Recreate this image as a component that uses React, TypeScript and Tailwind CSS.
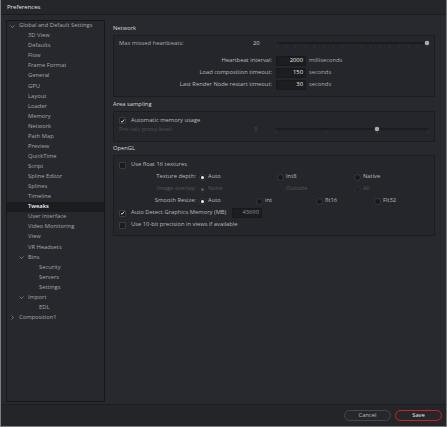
import React from 'react';

// Tree rows for the left-hand settings navigator
type TreeRow = { label: string; depth: number; chevron?: 'open' | 'closed'; selected?: boolean };

const treeRows: TreeRow[] = [
  { label: 'Global and Default Settings', depth: 0, chevron: 'open' },
  { label: '3D View', depth: 1 },
  { label: 'Defaults', depth: 1 },
  { label: 'Flow', depth: 1 },
  { label: 'Frame Format', depth: 1 },
  { label: 'General', depth: 1 },
  { label: 'GPU', depth: 1 },
  { label: 'Layout', depth: 1 },
  { label: 'Loader', depth: 1 },
  { label: 'Memory', depth: 1 },
  { label: 'Network', depth: 1 },
  { label: 'Path Map', depth: 1 },
  { label: 'Preview', depth: 1 },
  { label: 'QuickTime', depth: 1 },
  { label: 'Script', depth: 1 },
  { label: 'Spline Editor', depth: 1 },
  { label: 'Splines', depth: 1 },
  { label: 'Timeline', depth: 1 },
  { label: 'Tweaks', depth: 1, selected: true },
  { label: 'User Interface', depth: 1 },
  { label: 'Video Monitoring', depth: 1 },
  { label: 'View', depth: 1 },
  { label: 'VR Headsets', depth: 1 },
  { label: 'Bins', depth: 1, chevron: 'open' },
  { label: 'Security', depth: 2 },
  { label: 'Servers', depth: 2 },
  { label: 'Settings', depth: 2 },
  { label: 'Import', depth: 1, chevron: 'open' },
  { label: 'EDL', depth: 2 },
  { label: 'Composition1', depth: 0, chevron: 'closed' },
];

// left padding before the 9px chevron slot, per depth
const rowPad = ['pl-[3px]', 'pl-[12px]', 'pl-[23px]'];

function Chevron({ open }: { open: boolean }) {
  return (
    <svg width="5" height="5" viewBox="0 0 10 10">
      {open ? (
        <path d="M1 3 L5 7 L9 3" fill="none" stroke="#9a9ba0" strokeWidth="1.3" />
      ) : (
        <path d="M3 1 L7 5 L3 9" fill="none" stroke="#9a9ba0" strokeWidth="1.3" />
      )}
    </svg>
  );
}

function Tree() {
  return (
    <div className="ml-[5px] mt-[5px] w-[99px] h-[382px] bg-[#27282d] border border-[#16171a] flex flex-col">
      {treeRows.map((row) => (
        <div
          key={row.label}
          className={`h-[10.07px] flex items-center ${rowPad[row.depth]} ${row.selected ? 'bg-[#1b1c20] text-[#f2f2f2] font-semibold' : 'text-[#a6a7ab]'}`}
        >
          <span className="w-[9px] flex items-center shrink-0">
            {row.chevron && <Chevron open={row.chevron === 'open'} />}
          </span>
          <span className="leading-none">{row.label}</span>
        </div>
      ))}
    </div>
  );
}

function Checkbox({ checked }: { checked: boolean }) {
  return (
    <span className="w-[7px] h-[7px] bg-[#1a1b1e] border border-[#3a3b40] rounded-[1px] flex items-center justify-center shrink-0">
      {checked && (
        <svg width="6" height="6" viewBox="0 0 10 10">
          <path d="M2 5.5 L4.2 7.6 L8.4 2" fill="none" stroke="#f0f0f0" strokeWidth="1.8" />
        </svg>
      )}
    </span>
  );
}

function Radio({ on, disabled }: { on?: boolean; disabled?: boolean }) {
  return (
    <span
      className={`w-[7px] h-[7px] rounded-full flex items-center justify-center shrink-0 ${disabled ? 'bg-[#222327] border border-[#2c2d31]' : 'bg-[#17181b] border border-[#3a3b40]'}`}
    >
      {on && <span className={`w-[3px] h-[3px] rounded-full ${disabled ? 'bg-[#5c5d62]' : 'bg-[#f4f4f4]'}`} />}
    </span>
  );
}

function Slider({ width, thumb, ticks }: { width: number; thumb: number; ticks: number }) {
  return (
    <svg width={width} height="8" className="shrink-0 overflow-visible">
      <line x1="0" y1="3" x2={width} y2="3" stroke="#111214" strokeWidth="1" />
      {Array.from({ length: ticks }).map((_, i) => {
        const x = (width * i) / (ticks - 1);
        return <line key={i} x1={x} y1="6" x2={x} y2="7.5" stroke="#45464b" strokeWidth="0.6" />;
      })}
      <circle cx={thumb} cy="3" r="2.3" fill="#a8a9ad" />
    </svg>
  );
}

function NumberField({ value, width, dim }: { value: string; width: number; dim?: boolean }) {
  return (
    <span
      style={{ width }}
      className={`h-[10px] bg-[#1c1d20] border border-[#18191b] flex items-center justify-end pr-[2px] shrink-0 ${dim ? 'text-[#8c8d92]' : 'text-[#ececec]'}`}
    >
      {value}
    </span>
  );
}

function GroupHeader({ title, top }: { title: string; top: string }) {
  return <div className={`h-[10px] flex items-center text-[#d6d6d8] ${top} mb-[1px]`}>{title}</div>;
}

function TimeoutRow({ label, value, unit }: { label: string; value: string; unit: string }) {
  return (
    <div className="h-[12px] flex items-center">
      <span className="w-[158px] text-right text-[#b9babe]">{label}</span>
      <span className="ml-[4px]">
        <NumberField value={value} width={30} />
      </span>
      <span className="ml-[3px] text-[#a9aaae]">{unit}</span>
    </div>
  );
}

type Opt = { label: string; on?: boolean; w: number };

function RadioRow({ label, options, disabled }: { label: string; options: Opt[]; disabled?: boolean }) {
  return (
    <div className={`h-[12px] flex items-center ${disabled ? 'text-[#55565b]' : 'text-[#b9babe]'}`}>
      <span className="w-[82px] text-right">{label}</span>
      <span className="ml-[3px] flex items-center">
        {options.map((o) => (
          <span key={o.label} style={{ width: o.w }} className="flex items-center">
            <Radio on={o.on} disabled={disabled} />
            <span className="ml-[2px]">{o.label}</span>
          </span>
        ))}
      </span>
    </div>
  );
}

function CheckRow({ label, checked, children }: { label: string; checked: boolean; children?: React.ReactNode }) {
  return (
    <div className="h-[12px] flex items-center pl-[5px] text-[#b9babe]">
      <Checkbox checked={checked} />
      <span className="ml-[5px]">{label}</span>
      {children}
    </div>
  );
}

export default function App() {
  return (
    <div
      className="w-[447px] h-[427px] bg-[#28292e] border-r border-b border-l border-[#7d7e82] flex flex-col text-[5.8px] leading-none overflow-hidden"
      style={{ fontFamily: '"Open Sans", "Noto Sans", sans-serif' }}
    >
      <div className="h-[15px] shrink-0 bg-[#25262a] border-b border-[#1a1b1e] flex items-center pl-[6px] text-[#e4e4e6] text-[6px]">
        Preferences
      </div>

      <div className="flex-1 flex min-h-0">
        <Tree />

        <div className="ml-[8px] w-[322px] pt-[9px] flex flex-col">
          <GroupHeader title="Network" top="" />
          <div className="h-[62px] bg-[#25262b] border border-[#1b1c1f] rounded-[1px] pt-[2px] flex flex-col">
            <div className="h-[12px] flex items-center pl-[5px] text-[#a9aaae]">
              <span className="w-[134px]">Max missed heartbeats:</span>
              <span className="w-[24px] text-[#c9c9cc]">20</span>
              <Slider width={150} thumb={150} ticks={17} />
            </div>
            <div className="mt-[5px]">
              <TimeoutRow label="Heartbeat interval:" value="2000" unit="milliseconds" />
              <TimeoutRow label="Load composition timeout:" value="150" unit="seconds" />
              <TimeoutRow label="Last Render Node restart timeout:" value="30" unit="seconds" />
            </div>
          </div>

          <GroupHeader title="Area sampling" top="mt-[3px]" />
          <div className="h-[31px] bg-[#25262b] border border-[#1b1c1f] rounded-[1px] pt-[4px] flex flex-col">
            <div className="h-[9px] flex items-center pl-[5px] text-[#b9babe]">
              <Checkbox checked />
              <span className="ml-[5px]">Automatic memory usage</span>
            </div>
            <div className="h-[9px] flex items-center pl-[5px] text-[#505156]">
              <span className="w-[135px]">Pre-calc proxy level:</span>
              <span className="w-[22px]">3</span>
              <Slider width={152} thumb={101} ticks={4} />
            </div>
          </div>

          <GroupHeader title="OpenGL" top="mt-[2px]" />
          <div className="h-[81px] bg-[#25262b] border border-[#1b1c1f] rounded-[1px] pt-[3px] flex flex-col">
            <CheckRow label="Use float 16 textures" checked={false} />
            <RadioRow
              label="Texture depth:"
              options={[
                { label: 'Auto', on: true, w: 78 },
                { label: 'Int8', w: 77 },
                { label: 'Native', w: 40 },
              ]}
            />
            <RadioRow
              label="Image overlay:"
              disabled
              options={[
                { label: 'None', on: true, w: 78 },
                { label: 'Outside', w: 77 },
                { label: 'All', w: 40 },
              ]}
            />
            <RadioRow
              label="Smooth Resize:"
              options={[
                { label: 'Auto', on: true, w: 57 },
                { label: 'int', w: 60 },
                { label: 'flt16', w: 58 },
                { label: 'Flt32', w: 40 },
              ]}
            />
            <CheckRow label="Auto Detect Graphics Memory (MB)" checked>
              <span className="ml-auto mr-[172px]">
                <NumberField value="43690" width={30} dim />
              </span>
            </CheckRow>
            <CheckRow label="Use 10-bit precision in views if available" checked={false} />
          </div>
        </div>
      </div>

      <div className="h-[22px] shrink-0 bg-[#242529] border-t border-[#1c1d20] flex items-center justify-end pr-[4px] gap-[4px]">
        <button className="w-[47px] h-[11px] rounded-full border border-[#46474c] bg-[#26272b] text-[#bdbec2] text-[5.8px] leading-none">
          Cancel
        </button>
        <button className="w-[47px] h-[11px] rounded-full border border-[#c3262c] bg-[#26272b] text-[#eeeeee] text-[5.8px] leading-none">
          Save
        </button>
      </div>
    </div>
  );
}
